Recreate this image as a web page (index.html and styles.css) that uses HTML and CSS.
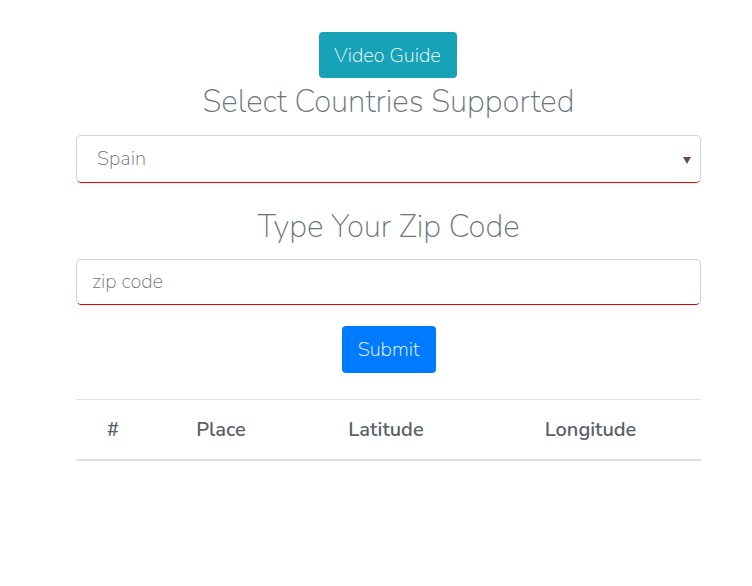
FILE: index.html
```html
<!DOCTYPE html>
<html>
<head>
<meta charset="utf-8">
<link rel="stylesheet" href="styles.css">
</head>
<body>
<main class="page">
  <div class="center"><button class="btn btn-info">Video Guide</button></div>
  <h2 class="title">Select Countries Supported</h2>
  <div class="select-box">
    <span class="select-value">Spain</span>
    <span class="caret"></span>
  </div>
  <h2 class="title title-zip">Type Your Zip Code</h2>
  <input class="zip" type="text" placeholder="zip code">
  <div class="center"><button class="btn btn-primary">Submit</button></div>
  <table class="table">
    <colgroup>
      <col class="c1"><col class="c2"><col class="c3"><col class="c4">
    </colgroup>
    <thead>
      <tr><th>#</th><th>Place</th><th>Latitude</th><th>Longitude</th></tr>
    </thead>
  </table>
</main>
</body>
</html>
```
FILE: styles.css
```css
html, body {
  margin: 0;
  padding: 0;
  background: #fff;
}
body {
  font-family: "Nunito", "Lato", "Open Sans", sans-serif;
  color: #6c757d;
}
.page {
  width: 625px;
  margin: 0 0 0 76px;
  padding-top: 32px;
}
.center {
  display: flex;
  justify-content: center;
}
.btn {
  font-family: inherit;
  font-weight: 200;
  color: #fff;
  border: none;
  border-radius: 4px;
  font-size: 20px;
  cursor: pointer;
  padding: 0;
}
.btn-info {
  background: #17a2b8;
  width: 138px;
  height: 46px;
  margin-left: -2px;
}
.btn-primary {
  background: #007bff;
  width: 94px;
  height: 47px;
  margin-top: 21px;
}
.title {
  margin: 0;
  text-align: center;
  font-weight: 200;
  font-size: 31.3px;
  line-height: 44px;
  color: #6c757d;
  margin-top: 2px;
  margin-bottom: 11px;
}
.title-zip {
  margin-top: 22px;
  margin-bottom: 10px;
}
.select-box {
  box-sizing: border-box;
  height: 48px;
  border: 1px solid #ced4da;
  border-bottom: 1px solid #ff0000;
  border-radius: 5px;
  display: flex;
  align-items: center;
  padding: 0 9px 0 20px;
}
.select-value {
  flex: 1;
  font-size: 20px;
  font-weight: 200;
  color: #6c757d;
  margin-top: -1px;
}
.caret {
  width: 0;
  height: 0;
  border-left: 4px solid transparent;
  border-right: 4px solid transparent;
  border-top: 7px solid #6f4c55;
  margin-top: 2px;
}
.zip {
  display: block;
  box-sizing: border-box;
  width: 100%;
  height: 46px;
  margin: 0;
  border: 1px solid #ced4da;
  border-bottom: 1px solid #e00000;
  border-radius: 5px;
  padding: 0 15px 1px;
  font-family: "Nunito", "Lato", sans-serif;
  font-size: 20px;
  font-weight: 200;
  color: #495057;
  outline: none;
}
.zip::placeholder {
  color: #6c757d;
  font-family: "Nunito", "Lato", sans-serif;
}
.table {
  width: 100%;
  border-collapse: collapse;
  margin-top: 26px;
  table-layout: fixed;
}
.c1 { width: 74px; }
.c2 { width: 142px; }
.c3 { width: 188px; }
.c4 { width: 221px; }
.table th {
  border-top: 1px solid #dee2e6;
  border-bottom: 2px solid #dee2e6;
  height: 59px;
  padding: 0;
  text-align: center;
  font-size: 20px;
  font-weight: 600;
  color: #5a6168;
}
```
